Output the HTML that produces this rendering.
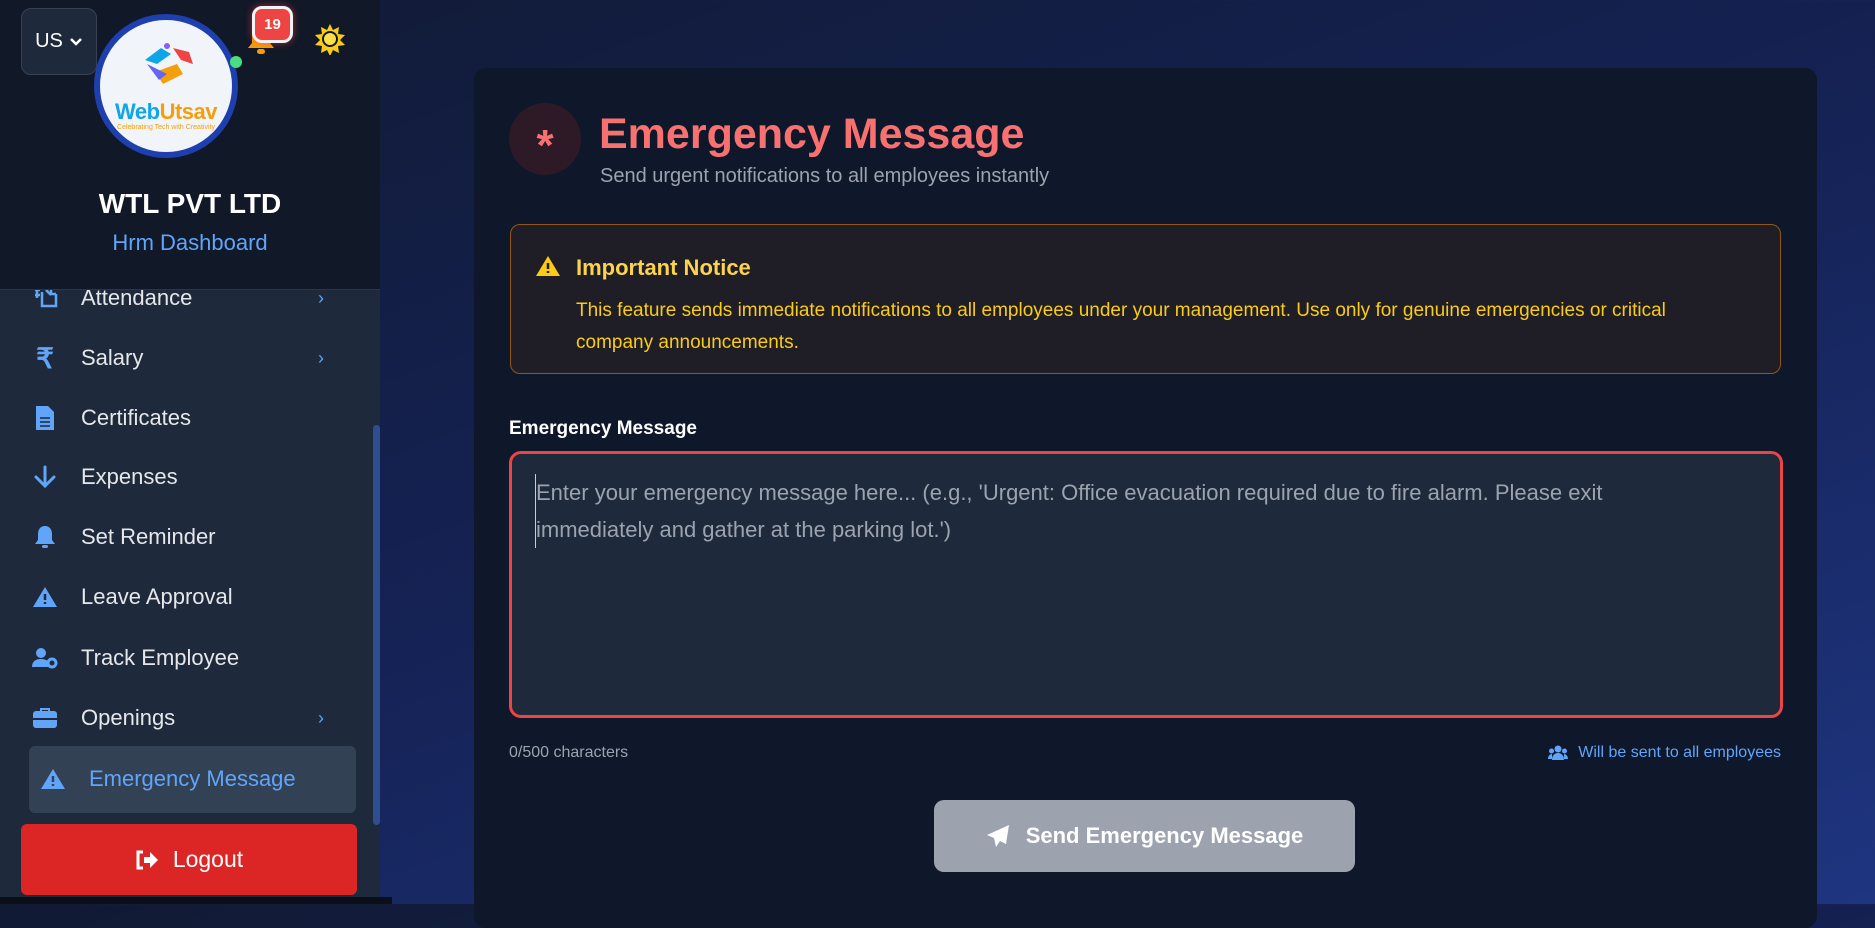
<!DOCTYPE html>
<html><head><meta charset="utf-8"><style>
*{margin:0;padding:0;box-sizing:border-box}
body{width:1875px;height:904px;overflow:hidden;font-family:"Liberation Sans",sans-serif;background:linear-gradient(160deg,#111a33 0%,#152255 50%,#1e3580 100%);position:relative}
.abs{position:absolute}
#side{left:0;top:0;width:380px;height:904px;background:#1e293b}
#head{left:0;top:0;width:380px;height:290px;background:#111827;border-bottom:1px solid #2b3548;z-index:2}
.mi{position:absolute;left:0;width:370px;height:50px;display:flex;align-items:center;color:#e5e7eb;font-size:22px}
.mi .ic{position:absolute;left:32px;width:26px;height:26px;display:flex;align-items:center;justify-content:center}
.mi .t{position:absolute;left:81px}
.mi .ch{position:absolute;left:318px;color:#60a5fa;font-size:18px}
#card{left:474px;top:68px;width:1343px;height:860px;background:#0f172a;border-radius:12px}
</style></head><body>
<div id="side" class="abs">
  <div class="mi" style="top:273px"><span class="ic"><svg width="26" height="24" viewBox="0 0 26 24"><path d="M3 4h5M3 9h5M5 2v10M10 6v14h14V8M14 4l5 5M19 3v5h5" stroke="#60a5fa" stroke-width="2.5" fill="none"/></svg></span><span class="t">Attendance</span><span class="ch">›</span></div>
  <div class="mi" style="top:333px"><span class="ic" style="color:#60a5fa;font-size:28px;font-weight:bold">₹</span><span class="t">Salary</span><span class="ch">›</span></div>
  <div class="mi" style="top:393px"><span class="ic"><svg width="20" height="26" viewBox="0 0 20 26"><path d="M1 1h12l6 6v18H1z" fill="#60a5fa"/><path d="M5 13h10M5 17h10M5 21h10" stroke="#1e293b" stroke-width="1.6"/></svg></span><span class="t">Certificates</span></div>
  <div class="mi" style="top:452px"><span class="ic"><svg width="22" height="24" viewBox="0 0 22 24"><path d="M11 2v19M2 12l9 9 9-9" stroke="#60a5fa" stroke-width="3" fill="none" stroke-linecap="round"/></svg></span><span class="t">Expenses</span></div>
  <div class="mi" style="top:512px"><span class="ic"><svg width="22" height="24" viewBox="0 0 22 24"><path d="M11 1c-5 0-7 4-7 8v6l-3 4h20l-3-4V9c0-4-2-8-7-8z" fill="#60a5fa"/><rect x="8" y="20" width="6" height="3" rx="1.5" fill="#60a5fa"/></svg></span><span class="t">Set Reminder</span></div>
  <div class="mi" style="top:572px"><span class="ic"><svg width="26" height="22" viewBox="0 0 26 22"><path d="M13 1L1 21h24z" fill="#60a5fa"/><path d="M13 8v6M13 16v2" stroke="#1e293b" stroke-width="2.5"/></svg></span><span class="t">Leave Approval</span></div>
  <div class="mi" style="top:633px"><span class="ic"><svg width="26" height="22" viewBox="0 0 26 22"><circle cx="9" cy="6" r="5" fill="#60a5fa"/><path d="M0 20c0-6 4-8 9-8s7 2 8 4v4z" fill="#60a5fa"/><circle cx="20" cy="16" r="4" fill="none" stroke="#60a5fa" stroke-width="3"/></svg></span><span class="t">Track Employee</span></div>
  <div class="mi" style="top:693px"><span class="ic"><svg width="26" height="22" viewBox="0 0 26 22"><path d="M9 4V2h8v2" stroke="#60a5fa" stroke-width="2" fill="none"/><rect x="1" y="4" width="24" height="17" rx="3" fill="#60a5fa"/><path d="M1 12h24" stroke="#1e293b" stroke-width="2"/></svg></span><span class="t">Openings</span><span class="ch">›</span></div>
  <div class="abs" style="left:29px;top:746px;width:327px;height:67px;background:#334155;border-radius:6px"></div>
  <div class="mi" style="top:754px;color:#60a5fa"><span class="ic" style="left:40px"><svg width="26" height="22" viewBox="0 0 26 22"><path d="M13 1L1 21h24z" fill="#60a5fa"/><path d="M13 8v6M13 16v2" stroke="#334155" stroke-width="2.5"/></svg></span><span class="t" style="left:89px">Emergency Message</span></div>
  <div class="abs" style="left:21px;top:824px;width:336px;height:71px;background:#dc2626;border-radius:6px;color:#fff;font-size:23px;display:flex;align-items:center;justify-content:center;gap:14px"><svg width="24" height="20" viewBox="0 0 24 20"><path d="M8 2H3v16h5" stroke="#fff" stroke-width="3" fill="none"/><path d="M9 7h6V2l8 8-8 8v-5H9z" fill="#fff"/></svg>Logout</div>
  <div class="abs" style="left:373px;top:425px;width:7px;height:400px;background:#2d4f8f;border-radius:4px"></div>
  <div class="abs" style="left:0;top:897px;width:392px;height:7px;background:#0b0f18"></div>
</div>
<div id="head" class="abs">
  <div class="abs" style="left:21px;top:8px;width:76px;height:67px;background:#1e293b;border:1px solid #374151;border-radius:10px;color:#fff;font-size:20px;display:flex;align-items:center;justify-content:center;gap:6px">US<svg width="14" height="10" viewBox="0 0 14 10"><path d="M2 2l5 5 5-5" stroke="#fff" stroke-width="2.5" fill="none"/></svg></div>
  <div class="abs" style="left:94px;top:14px;width:144px;height:144px;border-radius:50%;background:#f1f5f9;border:6px solid #1e40af;text-align:center">
    <svg class="abs" style="left:37px;top:22px" width="60" height="50" viewBox="0 0 60 50"><path d="M8 18l16-12 10 6-14 10z" fill="#0ea5e9"/><path d="M18 30l22-8 6 10-20 10z" fill="#f59e0b"/><path d="M36 6l16 4 4 12-12-4z" fill="#ef4444"/><path d="M10 22l12 16 8-6z" fill="#6366f1"/><circle cx="30" cy="4" r="3" fill="#8b5cf6"/></svg>
    <div class="abs" style="left:0;width:132px;top:79px;font-size:22px;color:#0ea5e9;font-weight:bold;letter-spacing:-0.5px">Web<span style="color:#f59e0b">Utsav</span></div>
    <div class="abs" style="left:0;width:132px;top:104px;font-size:7px;color:#f59e0b">Celebrating Tech with Creativity</div>
  </div>
  <div class="abs" style="left:230px;top:56px;width:12px;height:12px;border-radius:50%;background:#4ade80"></div>
  <svg class="abs" style="left:246px;top:24px" width="30" height="32" viewBox="0 0 30 32"><path d="M15 2c-6 0-9 5-9 10v7l-4 5h26l-4-5v-7c0-5-3-10-9-10z" fill="#f59e0b"/><rect x="11" y="25" width="8" height="5" rx="2.5" fill="#f59e0b"/></svg>
  <div class="abs" style="left:252px;top:6px;width:41px;height:37px;border-radius:10px;background:#ef4444;border:3px solid #f3f4f6;color:#fff;font-size:15px;font-weight:bold;display:flex;align-items:center;justify-content:center;box-shadow:0 0 8px rgba(239,68,68,.6)">19</div>
  <svg class="abs" style="left:314px;top:23px" width="32" height="32" viewBox="0 0 32 32"><path d="M16 1l3 6 6-3-1 7 7 1-5 5 5 5-7 1 1 7-6-3-3 6-3-6-6 3 1-7-7-1 5-5-5-5 7-1-1-7 6 3z" fill="#facc15"/><circle cx="16" cy="16" r="7" fill="#fde047" stroke="#111827" stroke-width="2"/></svg>
  <div class="abs" style="left:0;width:380px;top:188px;text-align:center;color:#fff;font-size:28px;font-weight:bold">WTL PVT LTD</div>
  <div class="abs" style="left:0;width:380px;top:230px;text-align:center;color:#60a5fa;font-size:22px">Hrm Dashboard</div>
</div>
<div id="card" class="abs">
  <div class="abs" style="left:35px;top:35px;width:72px;height:72px;border-radius:50%;background:#2d1a26;color:#f87171;font-size:44px;font-weight:bold;text-align:center;line-height:86px">*</div>
  <div class="abs" style="left:125px;top:42px;color:#f87171;font-size:43px;font-weight:bold">Emergency Message</div>
  <div class="abs" style="left:126px;top:97px;color:#9ca3af;font-size:20px">Send urgent notifications to all employees instantly</div>
  <div class="abs" style="left:36px;top:156px;width:1271px;height:150px;background:#1f1e26;border:1px solid #92580f;border-radius:10px">
    <svg class="abs" style="left:24px;top:30px" width="26" height="22" viewBox="0 0 26 22"><path d="M13 1L1 21h24z" fill="#facc15"/><path d="M13 8v6M13 16v2" stroke="#1f1e26" stroke-width="2.5"/></svg>
    <div class="abs" style="left:65px;top:30px;color:#fcd34d;font-size:22px;font-weight:bold">Important Notice</div>
    <div class="abs" style="left:65px;top:70px;width:1165px;color:#facc15;font-size:19px;line-height:32px">This feature sends immediate notifications to all employees under your management. Use only for genuine emergencies or critical company announcements.</div>
  </div>
  <div class="abs" style="left:35px;top:350px;color:#fff;font-size:19px;font-weight:bold">Emergency Message</div>
  <div class="abs" style="left:35px;top:383px;width:1274px;height:267px;background:#1e293b;border:3px solid #ef4444;border-radius:12px">
    <div class="abs" style="left:23px;top:20px;width:1120px;color:#9ca3af;font-size:22px;line-height:37px;border-left:1px solid #ccc">Enter your emergency message here... (e.g., 'Urgent: Office evacuation required due to fire alarm. Please exit immediately and gather at the parking lot.')</div>
  </div>
  <div class="abs" style="left:35px;top:676px;color:#9ca3af;font-size:16px">0/500 characters</div>
  <div class="abs" style="right:36px;top:676px;color:#60a5fa;font-size:16px;display:flex;align-items:center;gap:10px"><svg width="20" height="16" viewBox="0 0 20 16"><circle cx="10" cy="4" r="3.5" fill="#60a5fa"/><circle cx="3.5" cy="6" r="2.5" fill="#60a5fa"/><circle cx="16.5" cy="6" r="2.5" fill="#60a5fa"/><path d="M4 15c0-5 3-7 6-7s6 2 6 7zM0 14c0-3 2-5 4-5v5zM20 14c0-3-2-5-4-5v5z" fill="#60a5fa"/></svg>Will be sent to all employees</div>
  <div class="abs" style="left:460px;top:732px;width:421px;height:72px;background:#9ca3af;border-radius:10px;color:#fff;font-size:22px;font-weight:bold;display:flex;align-items:center;justify-content:center;gap:16px"><svg width="24" height="24" viewBox="0 0 24 24"><path d="M23 1L1 11l7 3 2 9 4-6 6 3z" fill="#fff"/></svg>Send Emergency Message</div>
</div>
</body></html>
